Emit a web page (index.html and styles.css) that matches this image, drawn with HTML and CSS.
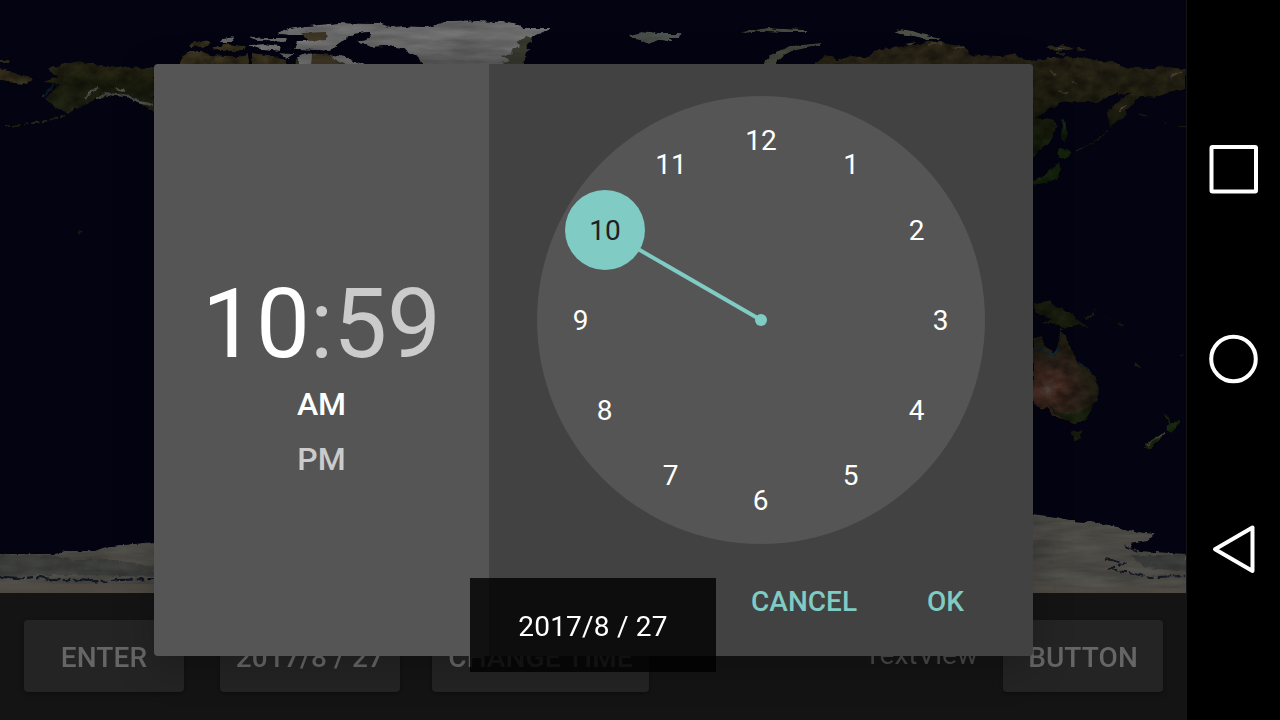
FILE: index.html
```html
<!DOCTYPE html>
<html lang="en">
<head>
<meta charset="utf-8">
<title>Time picker</title>
<link rel="stylesheet" href="styles.css">
</head>
<body>
<div class="device">
  <main class="screen">
    <svg class="map" viewBox="0 0 1186 593" width="1186" height="593" aria-hidden="true">
      <defs>
        <filter id="land" x="0" y="0" width="1186" height="593" filterUnits="userSpaceOnUse" color-interpolation-filters="sRGB">
          <feTurbulence type="fractalNoise" baseFrequency="0.13" numOctaves="3" seed="4" result="edge"/>
          <feDisplacementMap in="SourceGraphic" in2="edge" scale="5" xChannelSelector="R" yChannelSelector="G" result="shape"/>
          <feTurbulence type="fractalNoise" baseFrequency="0.07 0.1" numOctaves="4" seed="9"/>
          <feColorMatrix values="1.2 0 0 0 0  1.2 0 0 0 0  1.2 0 0 0 0  0 0 0 0 1" result="tone"/>
          <feComposite in="shape" in2="tone" operator="arithmetic" k1="0.7" k2="0.42" k3="0" k4="0" result="mixed"/>
          <feComposite in="mixed" in2="shape" operator="in"/>
        </filter>
        <filter id="ice" x="0" y="0" width="1186" height="593" filterUnits="userSpaceOnUse" color-interpolation-filters="sRGB">
          <feTurbulence type="fractalNoise" baseFrequency="0.1 0.2" numOctaves="3" seed="7" result="edge"/>
          <feDisplacementMap in="SourceGraphic" in2="edge" scale="5" xChannelSelector="R" yChannelSelector="G" result="shape"/>
          <feTurbulence type="fractalNoise" baseFrequency="0.018 0.1" numOctaves="4" seed="2"/>
          <feColorMatrix values="0.7 0 0 0 0.45  0.7 0 0 0 0.45  0.7 0 0 0 0.45  0 0 0 0 1" result="tone"/>
          <feComposite in="shape" in2="tone" operator="arithmetic" k1="0.7" k2="0.42" k3="0" k4="0" result="mixed"/>
          <feComposite in="mixed" in2="shape" operator="in"/>
        </filter>
        <radialGradient id="outback" gradientUnits="userSpaceOnUse" cx="1048" cy="388" r="50">
          <stop offset="0" stop-color="#645248"/><stop offset=".2" stop-color="#4a2e24"/><stop offset=".55" stop-color="#30241c"/><stop offset="1" stop-color="#201f12"/>
        </radialGradient>
        <linearGradient id="siberia" x1="0" y1="0" x2="0" y2="1">
          <stop offset="0" stop-color="#2a2617"/><stop offset=".5" stop-color="#201f10"/><stop offset="1" stop-color="#13200a"/>
        </linearGradient>
        <linearGradient id="alaska" x1="0" y1="0" x2="0" y2="1">
          <stop offset="0" stop-color="#2a2715"/><stop offset=".5" stop-color="#1b1e0d"/><stop offset="1" stop-color="#242618"/>
        </linearGradient>
        <linearGradient id="greenland" x1="0" y1="0" x2="0" y2="1">
          <stop offset="0" stop-color="#6a6a6a"/><stop offset=".6" stop-color="#686868"/><stop offset="1" stop-color="#595959"/>
        </linearGradient>
      </defs>
      <rect width="1186" height="593" fill="#040311"/>

      <g filter="url(#land)">
        <path fill="#352f1c" d="M0 68 10 70 19 75 33 78 28 85 14 83 0 81ZM0 60h9v3H0Z"/>
        <path fill="url(#alaska)" d="M46 69 60 65 78 61 100 65 124 67 154 68V113L145 106 130 98 108 95 96 99 88 104 76 108 70 113 58 110 45 99 52 91 60 84 42 82 58 77Z"/>
        <path fill="none" stroke="#242b18" stroke-width="2" d="M75 109 62 116 46 121 28 124 2 127" stroke-dasharray="9 2 5 3"/>
        <path fill="none" stroke="#525250" stroke-width="2.4" d="M86 98 91 90 99 88M96 99 105 93 116 95 127 96 138 101 153 104M116 88 124 91"/>
        <path fill="#3a331f" d="M180 62 186 51 203 51 210 55 237 56 248 54 250 66H180ZM189 45 202 41 211 42 208 46 190 47ZM212 49 226 44 246 46 244 51 220 51ZM252 53 270 55 285 60 288 66H252ZM297 57 310 53 336 55 360 66H296Z"/>
        <path fill="#2e2819" d="M812 66 824 55 833 56 837 61 850 56 866 57 880 49 913 45 926 42 940 42 967 48 969 54 1002 56 1015 53 1021 58 1033 62 1050 58 1078 57 1092 60 1120 63 1122 67H812ZM1044 47 1063 45 1075 49 1058 52ZM1076 48 1090 50 1076 52ZM1056 53h10v2h-10Z"/>
        <path fill="url(#siberia)" d="M1029 60 1066 57 1118 63 1123 67 1154 69 1159 66 1186 69V89L1175 90 1155 98 1143 97 1134 100 1132 105 1127 110 1128 115 1115 123 1110 129 1107 114 1110 107 1121 100 1131 92 1118 96 1118 93 1106 97 1097 102 1061 103 1042 114 1038 118 1053 120 1057 124 1053 137 1042 149 1030 158Z"/>
        <path fill="#15240e" d="M1062 118 1065 119 1067 133 1065 142 1061 139ZM1060 148 1067 149 1072 154 1065 158 1057 159ZM1058 161 1061 169 1057 180 1046 183 1033 185V180L1046 174 1054 167Z"/>
        <path fill="none" stroke="#172110" stroke-width="1.5" d="M1108 130 1101 137 1088 146 1075 151M1140 114 1149 117M1163 122 1167 124M1178 126 1186 127"/>
        <path fill="none" stroke="#49453a" stroke-width="1.2" d="M1050 69 1056 76M1057 91 1069 93M1073 81 1077 84M1120 112 1125 104M1171 77 1181 71"/>
        <path fill="#1b1f0e" d="M1034 303 1046 301 1062 308 1075 316 1090 330 1077 325 1064 327 1050 323 1043 324 1049 318 1036 313ZM1083 317 1091 315 1096 309 1095 314 1088 319ZM1104 315 1112 321 1107 319ZM1116 322 1126 328 1117 326ZM1134 361 1144 370 1136 366ZM1178 356 1184 353 1182 357Z"/>
        <path fill="url(#outback)" d="M1033 338 1042 336 1044 345 1054 353 1058 350 1060 330 1065 334 1070 347 1076 360 1086 368 1095 377 1099 389 1098 398 1091 410 1085 420 1076 424 1066 420 1053 417 1047 407 1042 411 1033 403Z"/>
        <path fill="#18200e" d="M1049 407 1060 414 1074 414 1088 407 1093 404 1087 417 1076 423 1060 418ZM1071 431 1082 431 1081 439 1074 440Z"/>
        <path fill="#1a2910" d="M1163 411 1168 416 1171 422 1181 421 1176 429 1171 433 1166 430 1169 424ZM1166 431 1159 441 1149 449 1143 447 1151 440 1160 434Z"/>
        <path fill="none" stroke="#484840" stroke-width="2" d="M1165 433 1152 441 1147 446"/>
        <path fill="none" stroke="#10292f" stroke-width="2" d="M1036 346 1044 352 1055 355 1059 346M1059 329 1064 329M1080 362 1091 372M42 98 49 90 54 84"/>
        <path fill="#282b19" d="M78 230 83 231 80 235Z"/>
      </g>

      <g filter="url(#ice)">
        <path fill="url(#greenland)" d="M356 42 372 37 369 31 384 28 402 26 428 27 445 22 478 21 504 22 519 25 524 28 552 28 539 34 530 39 524 47 524 66H425L416 56 402 48 385 46 372 47Z"/>
        <path fill="#34362c" d="M533 38 526 36 518 42 520 46 511 51 514 54 500 56 510 60 498 64 525 64 524 54 531 49 526 45 532 42Z"/>
        <path fill="#696969" d="M277 34 288 29 306 26 338 23 382 24 390 27 376 31 353 34 338 44 330 51 295 49 298 41 323 39 308 35 289 35ZM247 36 268 38 287 38 285 42 257 41ZM222 39 234 37 231 42 221 42ZM248 45 264 44 281 46 280 51 260 49ZM279 53 295 54 287 59ZM298 56 304 53 315 54 311 66H298ZM330 54 345 57 368 66H347L332 59Z"/>
        <path fill="#3d3524" d="M301 33 326 32 327 40 309 41ZM312 55 330 55 342 66H311Z"/>
        <path fill="#4d534f" d="M628 35 642 32 659 34 682 34 678 37 668 37 673 42 660 40 648 44 640 40 631 39Z"/>
        <path fill="#45483d" d="M741 32 767 28 806 30 806 32 782 32 763 31 745 33ZM763 66 765 60 773 53 790 46 820 43 820 46 801 49 787 54 777 61 775 66ZM893 33 901 29 913 31 922 34 938 37 941 39 926 39 913 36ZM1055 50 1059 46 1066 49Z"/>
        <path fill="#423b2e" d="M903 44 917 42 912 46ZM925 44 940 42 944 44 929 46ZM947 47 963 46 965 49Z"/>
        <path fill="#4b4a45" d="M-4 554H52L72 551 93 551 110 546 154 542 350 538 800 520 1033 514 1057 517 1075 521 1090 522 1110 525 1133 531 1155 534 1149 540 1132 543 1130 547 1142 551 1190 554V598H-4Z"/>
      </g>
      <g filter="url(#land)">
        <path fill="none" stroke="#161c2a" stroke-width="2.5" stroke-dasharray="24 2 8 3" d="M0 577 22 578 40 577 54 580 77 580 103 582 118 580 154 579"/>
        <path fill="#262e32" opacity=".55" d="M0 554 52 555 75 560 108 559 154 566V577L80 575 0 576Z"/>
        <path fill="none" stroke="#181c2a" stroke-width="2.2" stroke-dasharray="15 2 7 3" d="M1106 559 1124 563 1110 569 1134 574 1151 577 1185 576M1124 546 1140 553"/>
        <path fill="#2b3337" opacity=".6" d="M1130 556 1186 554V572L1146 568Z"/>
      </g>
      <path fill="#514c43" opacity=".65" d="M0 584H154V593H0ZM1033 588H1186V593H1033Z"/>
    </svg>

    <div class="toolbar">
      <div class="tool-group">
        <button class="tool enter">ENTER</button>
        <button class="tool date">2017/8 / 27</button>
        <button class="tool time">CHANGE TIME</button>
      </div>
      <div class="tool-group end">
        <span class="label">TextView</span>
        <button class="tool enter">BUTTON</button>
      </div>
    </div>

    <section class="dialog">
      <div class="header">
        <div class="clock-text"><span class="on">10</span><span>:59</span></div>
        <div class="period on">AM</div>
        <div class="period">PM</div>
      </div>
      <div class="picker">
        <svg class="dial" viewBox="0 0 448 448" width="448" height="448">
          <circle cx="224" cy="224" r="224" fill="#555"/>
          <path d="M224 224 68 134" stroke="#80cbc4" stroke-width="4"/>
          <circle cx="224" cy="224" r="6" fill="#80cbc4"/>
          <circle cx="68" cy="134" r="40" fill="#80cbc4"/>
          <g class="hours">
            <text x="224" y="54">12</text><text x="314" y="78">1</text><text x="379.7" y="144">2</text>
            <text x="403.6" y="234">3</text><text x="379.7" y="324">4</text><text x="313.7" y="389">5</text>
            <text x="223.7" y="414">6</text><text x="133.7" y="389">7</text><text x="67.7" y="324">8</text>
            <text x="43.6" y="234">9</text><text class="picked" x="68" y="144">10</text><text x="134" y="78">11</text>
          </g>
        </svg>
        <div class="actions"><button class="action">CANCEL</button><button class="action">OK</button></div>
      </div>
    </section>
    <div class="toast">2017/8 / 27</div>
  </main>

  <nav class="navbar">
    <svg width="56" height="56" viewBox="0 0 56 56"><rect x="6.5" y="6" width="44.5" height="44.5" rx="1" /></svg>
    <svg width="56" height="56" viewBox="0 0 56 56"><circle cx="28.5" cy="28" r="22.3"/></svg>
    <svg width="56" height="56" viewBox="0 0 56 56"><path d="M47.5 6.5V50L10 28.3Z"/></svg>
  </nav>
</div>
</body>
</html>
```
FILE: styles.css
```css
* { box-sizing: border-box; }
body { margin: 0; background: #000; font-family: Roboto, sans-serif; font-size: 28px; }
button { margin: 0; padding: 0; border: 0; font: 500 28px/34px Roboto, sans-serif; }
.device { display: flex; width: 1280px; height: 720px; overflow: hidden; }
.screen { position: relative; display: flex; flex-direction: column; width: 1187px; height: 720px; overflow: hidden; background: #141414; }
.map { display: block; flex: none; }
.toolbar { display: flex; justify-content: space-between; height: 127px; padding: 27px 24px 0; }
.tool-group { display: flex; align-items: flex-start; }
.tool { height: 72px; padding-top: 4px; border-radius: 4px; background: #242424; color: #666; letter-spacing: .1px; box-shadow: 0 2px 5px rgba(0, 0, 0, .35); }
.enter { width: 160px; }
.date { width: 180px; margin-left: 36px; }
.time { width: 217px; margin-left: 32px; }
.label { margin: 18px 25px 0 0; color: #484848; line-height: 33px; }
.dialog { position: absolute; left: 154px; top: 64px; display: flex; width: 879px; height: 592px; border-radius: 4px; overflow: hidden; box-shadow: 0 10px 40px rgba(0, 0, 0, .22); }
.header { display: flex; flex-direction: column; align-items: center; width: 335px; padding-top: 204px; background: #555; color: #cbcbcb; }
.clock-text { height: 111px; font-size: 96px; line-height: 112px; white-space: nowrap; }
.on { color: #fff; }
.period { height: 55px; font-size: 32px; font-weight: 500; line-height: 50px; }
.picker { display: flex; flex-direction: column; align-items: center; width: 544px; padding-top: 32px; background: #424242; }
.dial { display: block; flex: none; }
.hours { fill: #fff; font-size: 28px; text-anchor: middle; }
.hours .picked { fill: #212121; }
.actions { display: flex; gap: 70px; align-self: flex-end; padding: 41px 69px 0 0; }
.action { background: none; color: #80cbc4; }
.toast { position: absolute; left: 470px; top: 578px; width: 246px; height: 94px; background: rgba(0, 0, 0, .8); color: #fff; line-height: 98px; letter-spacing: .2px; text-align: center; }
.navbar { display: flex; flex-direction: column; align-items: center; gap: 134px; width: 93px; padding: 141px 2px 0 0; background: #000; }
.navbar svg { display: block; flex: none; fill: none; stroke: #fff; stroke-width: 4; stroke-linejoin: round; }
```
